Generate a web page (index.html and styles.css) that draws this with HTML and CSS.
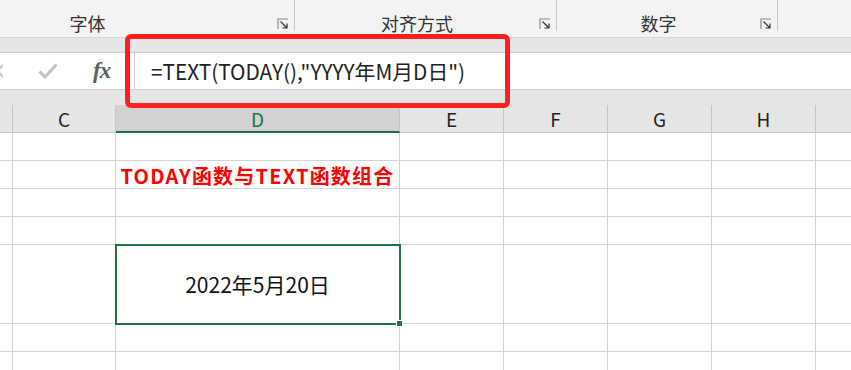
FILE: index.html
```html
<!doctype html>
<html>
<head>
<meta charset="utf-8">
<title>TODAY函数与TEXT函数组合</title>
<link rel="stylesheet" href="styles.css">
</head>
<body>
<div class="ribbon">
	<div class="group group-font">
		<span class="label">字体</span>
		<svg class="launcher" width="12" height="12" viewBox="0 0 12 12"><path d="M1 11V1h10" fill="none" stroke="#8a8a8a" stroke-width="1.2"/><path d="M3.5 3.5l6 6M10 5.5V10H5.5" fill="none" stroke="#333" stroke-width="1.2"/></svg>
	</div>
	<div class="group group-align">
		<span class="label">对齐方式</span>
		<svg class="launcher" width="12" height="12" viewBox="0 0 12 12"><path d="M1 11V1h10" fill="none" stroke="#8a8a8a" stroke-width="1.2"/><path d="M3.5 3.5l6 6M10 5.5V10H5.5" fill="none" stroke="#333" stroke-width="1.2"/></svg>
	</div>
	<div class="group group-number">
		<span class="label">数字</span>
		<svg class="launcher" width="12" height="12" viewBox="0 0 12 12"><path d="M1 11V1h10" fill="none" stroke="#8a8a8a" stroke-width="1.2"/><path d="M3.5 3.5l6 6M10 5.5V10H5.5" fill="none" stroke="#333" stroke-width="1.2"/></svg>
	</div>
</div>

<div class="formula-band">
	<div class="formula-bar">
		<div class="bar-buttons">
			<svg class="cancel" width="3" height="14" viewBox="9 0 3 14"><path d="M1 1l11 12M12 1L1 13" stroke="#c4c4c4" stroke-width="2"/></svg>
			<svg class="enter" width="20" height="16" viewBox="0 0 20 16"><path d="M1.5 8.5l5.5 5.5L18.5 1.5" fill="none" stroke="#c2c2c2" stroke-width="3"/></svg>
			<span class="fx">fx</span>
		</div>
		<div class="formula-input">=TEXT(TODAY(),"YYYY年M月D日")</div>
	</div>
	<div class="highlight"></div>
</div>

<div class="sheet">
	<div class="head">&nbsp;</div>
	<div class="head">C</div>
	<div class="head head-active">D</div>
	<div class="head">E</div>
	<div class="head">F</div>
	<div class="head">G</div>
	<div class="head">H</div>
	<div class="head head-last">&nbsp;</div>

	<div class="cell"></div><div class="cell"></div><div class="cell"></div><div class="cell"></div>
	<div class="cell"></div><div class="cell"></div><div class="cell"></div><div class="cell"></div>

	<div class="cell"></div><div class="cell"></div>
	<div class="cell title">TODAY函数与TEXT函数组合</div>
	<div class="cell"></div><div class="cell"></div><div class="cell"></div><div class="cell"></div><div class="cell"></div>

	<div class="cell"></div><div class="cell"></div><div class="cell"></div><div class="cell"></div>
	<div class="cell"></div><div class="cell"></div><div class="cell"></div><div class="cell"></div>

	<div class="cell"></div><div class="cell"></div><div class="cell"></div><div class="cell"></div>
	<div class="cell"></div><div class="cell"></div><div class="cell"></div><div class="cell"></div>

	<div class="cell"></div><div class="cell"></div>
	<div class="cell selected">2022年5月20日<span class="handle"></span></div>
	<div class="cell"></div><div class="cell"></div><div class="cell"></div><div class="cell"></div><div class="cell"></div>

	<div class="cell"></div><div class="cell"></div><div class="cell"></div><div class="cell"></div>
	<div class="cell"></div><div class="cell"></div><div class="cell"></div><div class="cell"></div>

	<div class="cell"></div><div class="cell"></div><div class="cell"></div><div class="cell"></div>
	<div class="cell"></div><div class="cell"></div><div class="cell"></div><div class="cell"></div>
</div>
</body>
</html>
```

FILE: styles.css
```css
* {
	margin: 0;
	padding: 0;
	box-sizing: border-box;
}

html, body {
	width: 851px;
	height: 370px;
	overflow: hidden;
}

body {
	background: #fff;
	font-family: "Noto Sans CJK SC", sans-serif;
	color: #222;
}

/* ribbon */
.ribbon {
	height: 38px;
	display: flex;
	background: #f3f3f3;
	border-bottom: 1px solid #d6d6d6;
}

.group {
	height: 31px;
	display: flex;
	align-items: flex-end;
	border-right: 1px solid #c6c6c6;
	padding-right: 5px;
}

.group .label {
	flex: 1;
	text-align: center;
	font-size: 18px;
	line-height: 20px;
	color: #333;
	margin-bottom: -2px;
}

.group .launcher {
	margin-bottom: 1px;
}

.group-font {
	width: 295px;
}

.group-font .label {
	padding-right: 102px;
}

.group-align {
	width: 262px;
}

.group-number {
	width: 221px;
}

/* formula bar */
.formula-band {
	position: relative;
	height: 67px;
	padding-top: 14px;
	background: #e6e6e6;
}

.formula-bar {
	height: 38px;
	display: flex;
	background: #fff;
	border-top: 1px solid #cfcfcf;
	border-bottom: 1px solid #cfcfcf;
}

.bar-buttons {
	width: 134px;
	display: flex;
	align-items: center;
}

.bar-buttons .enter {
	margin-left: 35px;
}

.bar-buttons .fx {
	margin-left: 35px;
	font: italic bold 23px "Liberation Serif", serif;
	color: #5f5f5f;
	letter-spacing: -1px;
}

.formula-input {
	flex: 1;
	border-left: 1px solid #cfcfcf;
	padding-left: 16px;
	font-size: 20.8px;
	line-height: 36px;
	color: #222;
}

.highlight {
	position: absolute;
	left: 125px;
	top: -4px;
	width: 385px;
	height: 74px;
	border: 5px solid #ff1f1f;
	border-radius: 6px;
}

/* sheet */
.sheet {
	display: grid;
	grid-template-columns: 13px 103px 284px 104px 104px 104px 104px 1fr;
	grid-template-rows: 28px 28px 28px 28px 28px 79px 28px 28px;
}

.head {
	background: #e6e6e6;
	border-right: 1px solid #c6c6c6;
	border-bottom: 1px solid #c6c6c6;
	text-align: center;
	font-size: 19px;
	line-height: 27px;
	color: #222;
}

.head-active {
	background: #d2d2d2;
	color: #217346;
	border-bottom: 2px solid #217346;
}

.head-last {
	border-right: none;
}

.cell {
	border-right: 1px solid #d4d4d4;
	border-bottom: 1px solid #d4d4d4;
}

.sheet > .cell:nth-child(8n) {
	border-right: none;
}

.title {
	text-align: center;
	font-size: 20px;
	font-weight: bold;
	letter-spacing: 1.2px;
	line-height: 30px;
	color: #ff0000;
	white-space: nowrap;
}

.selected {
	position: relative;
	display: flex;
	align-items: center;
	justify-content: center;
	font-size: 21px;
	color: #111;
	outline: 2px solid #217346;
	outline-offset: -1px;
}

.handle {
	position: absolute;
	right: -4px;
	bottom: -4px;
	width: 7px;
	height: 7px;
	background: #217346;
	border: 1px solid #fff;
}
```
